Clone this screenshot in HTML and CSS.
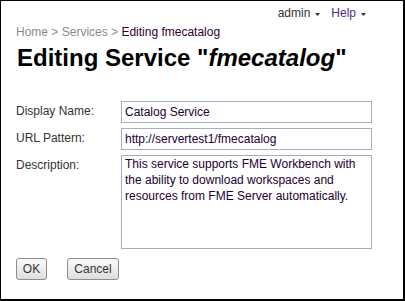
FILE: index.html
```html
<!DOCTYPE html>
<html>
<head>
<meta charset="utf-8">
<link rel="stylesheet" href="styles.css">
</head>
<body>
<div class="frame">
  <div class="topnav">
    <span class="menu admin">admin<svg class="caret" width="5" height="3" viewBox="0 0 5 3"><polygon points="0,0 5,0 2.5,3" fill="#333"/></svg></span>
    <span class="menu help">Help<svg class="caret" width="5" height="3" viewBox="0 0 5 3"><polygon points="0,0 5,0 2.5,3" fill="#333"/></svg></span>
  </div>
  <div class="crumbs">
    <span class="crumb">Home</span> &gt; <span class="crumb">Services</span> &gt; <span class="current">Editing fmecatalog</span>
  </div>
  <h1 class="title">Editing Service "<em>fmecatalog</em>"</h1>
  <form class="form">
    <div class="row">
      <label class="label">Display Name:</label>
      <input class="field" type="text" value="Catalog Service">
    </div>
    <div class="row">
      <label class="label">URL Pattern:</label>
      <input class="field" type="text" value="http://servertest1/fmecatalog">
    </div>
    <div class="row">
      <label class="label">Description:</label>
      <textarea class="field area">This service supports FME Workbench with the ability to download workspaces and resources from FME Server automatically.</textarea>
    </div>
    <div class="buttons">
      <button type="button" class="btn ok">OK</button>
      <button type="button" class="btn cancel">Cancel</button>
    </div>
  </form>
</div>
</body>
</html>
```
FILE: styles.css
```css
html, body {
  margin: 0;
  padding: 0;
  background: #fff;
}
.frame {
  box-sizing: border-box;
  width: 405px;
  height: 301px;
  border-style: solid;
  border-color: #000;
  border-width: 1px 2px 2px 1px;
  font-family: "Liberation Sans", Arial, sans-serif;
  font-size: 12px;
  color: #333;
  padding: 0 0 0 15px;
}
.topnav {
  display: flex;
  justify-content: flex-end;
  gap: 11px;
  padding: 5px 37px 0 0;
  line-height: 15px;
}
.menu {
  display: inline-flex;
  align-items: center;
  gap: 5px;
}
.admin { color: #333; }
.help { color: #4b2c7f; }
.caret {
  display: block;
  margin-top: 2px;
}
.crumbs {
  margin-top: 4px;
  line-height: 15px;
  color: #8a8a8a;
}
.crumb { color: #8a8a8a; }
.current { color: #330033; }
.title {
  margin: 4px 0 0 1px;
  font-size: 24px;
  font-weight: bold;
  color: #000;
  line-height: 28px;
}
.title em { font-style: italic; }
.form {
  margin-top: 29px;
  display: flex;
  flex-direction: column;
  gap: 5px;
}
.row {
  display: flex;
  align-items: flex-start;
}
.label {
  width: 105px;
  padding: 3px 0 0 0;
  line-height: 15px;
  color: #333;
}
.field {
  box-sizing: border-box;
  width: 251px;
  height: 22px;
  margin: 0;
  border: 1px solid #ababc2;
  padding: 0 3px;
  font-family: "Liberation Sans", Arial, sans-serif;
  font-size: 12px;
  color: #220033;
  background: #fff;
  outline: none;
}
.area {
  height: 94px;
  line-height: 16px;
  resize: none;
  padding: 0 3px;
  overflow: hidden;
  display: block;
}
.buttons {
  display: flex;
  gap: 20px;
  margin-top: 4px;
}
.btn {
  box-sizing: border-box;
  height: 22px;
  padding: 0;
  border: 1px solid #8e8e8e;
  border-radius: 3px;
  background: linear-gradient(#fafafa, #dedede);
  font-family: "Liberation Sans", Arial, sans-serif;
  font-size: 12px;
  color: #333;
}
.ok { width: 31px; }
.cancel { width: 52px; }
```
